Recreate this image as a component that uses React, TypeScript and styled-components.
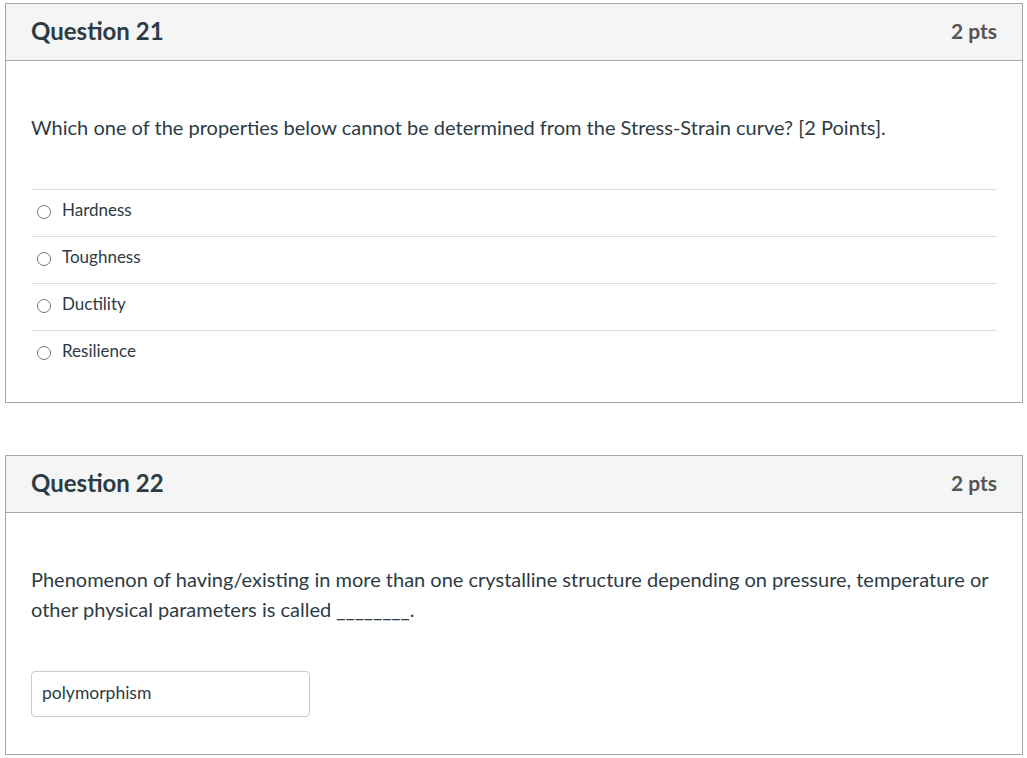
import { FunctionComponent } from 'react';
import styled, { createGlobalStyle } from 'styled-components';

const GlobalStyle = createGlobalStyle`
  body {
    margin: 0;
    background: #fff;
    font-family: Lato, "Liberation Sans", sans-serif;
    color: #2d3b45;
  }
`;

const Page = styled.div`
  padding: 3px 4px 0 5px;
  display: flex;
  flex-direction: column;
  gap: 52px;
`;

const Card = styled.div`
  border: 1px solid #a6a6a6;
  background: #fff;
`;

const Header = styled.div`
  height: 57px;
  display: flex;
  align-items: center;
  justify-content: space-between;
  padding: 0 25px 4px 25px;
  box-sizing: border-box;
  background: #f5f5f5;
  border-bottom: 1px solid #a6a6a6;
`;

const Title = styled.h2`
  margin: 0;
  font-size: 24px;
  font-weight: 700;
  color: #2d3b45;
`;

const Points = styled.span`
  font-size: 21px;
  font-weight: 700;
  color: #555;
`;

const Body = styled.div<{ pb: number }>`
  padding: 51px 25px ${({ pb }) => pb}px 25px;
`;

const QuestionText = styled.p`
  margin: 0;
  font-size: 20px;
  line-height: 30px;
  color: #2d3b45;
`;

const Answers = styled.div`
  margin-top: 47px;
  display: flex;
  flex-direction: column;
`;

const Answer = styled.label`
  display: flex;
  align-items: center;
  gap: 11px;
  padding: 0 0 7px 6px;
  height: 39px;
  border-top: 1px solid #ddd;
  font-size: 17px;
  color: #2d3b45;
`;

const Radio = styled.span`
  width: 14px;
  height: 14px;
  border: 1px solid #777;
  border-radius: 50%;
  box-sizing: border-box;
  margin-top: 5px;
  flex: none;
`;

const TextInput = styled.div`
  margin-top: 47px;
  width: 279px;
  height: 46px;
  box-sizing: border-box;
  border: 1px solid #c7cdd1;
  border-radius: 4px;
  padding: 0 10px 3px 10px;
  display: flex;
  align-items: center;
  font-size: 17.5px;
  color: #2d3b45;
`;

const QuestionCard: FunctionComponent<{ title: string; pts: string; pb: number; children: React.ReactNode }> = ({ title, pts, pb, children }) => (
  <Card>
    <Header>
      <Title>{title}</Title>
      <Points>{pts}</Points>
    </Header>
    <Body pb={pb}>{children}</Body>
  </Card>
);

const answers = ['Hardness', 'Toughness', 'Ductility', 'Resilience'];

const App = () => (
  <>
    <GlobalStyle />
    <Page>
      <QuestionCard title="Question 21" pts="2 pts" pb={25}>
        <QuestionText>
          Which one of the properties below cannot be determined from the Stress-Strain curve? [2 Points].
        </QuestionText>
        <Answers>
          {answers.map((a) => (
            <Answer key={a}>
              <Radio />
              {a}
            </Answer>
          ))}
        </Answers>
      </QuestionCard>
      <QuestionCard title="Question 22" pts="2 pts" pb={37}>
        <QuestionText>
          Phenomenon of having/existing in more than one crystalline structure depending on pressure, temperature or
          other physical parameters is called ________.
        </QuestionText>
        <TextInput>polymorphism</TextInput>
      </QuestionCard>
    </Page>
  </>
);

export default App;
